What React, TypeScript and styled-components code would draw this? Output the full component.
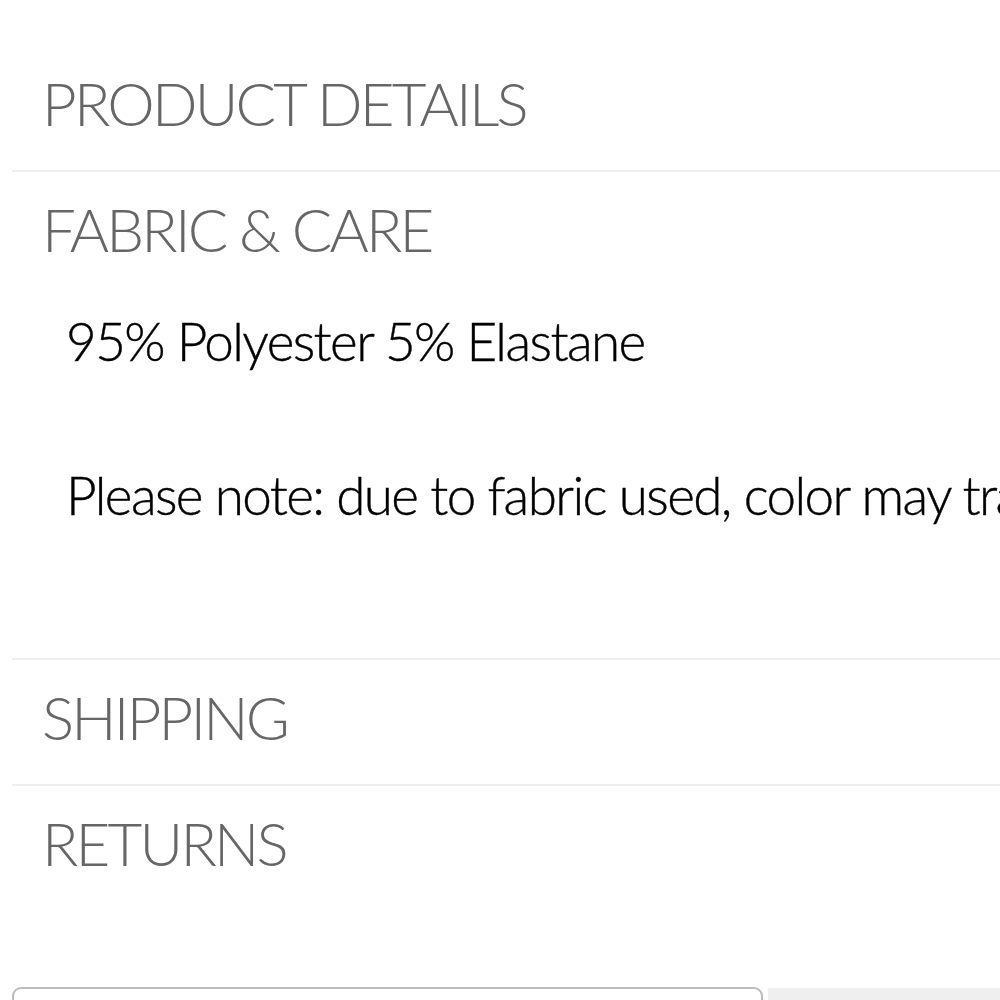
import React from "react";
import styled, { createGlobalStyle } from "styled-components";

const GlobalStyle = createGlobalStyle`
  html, body {
    margin: 0;
    padding: 0;
    background: #ffffff;
    overflow: hidden;
  }
  body {
    font-family: "Lato", "Liberation Sans", sans-serif;
  }
`;

const Page = styled.div`
  width: 1600px;
  height: 1000px;
  padding: 46px 0 0 12px;
  box-sizing: border-box;
  display: flex;
  flex-direction: column;
`;

const Section = styled.section<{ $last?: boolean; $open?: boolean }>`
  border-bottom: ${(p) => (p.$last ? "none" : "2px solid #efefef")};
  padding-bottom: ${(p) => (p.$open ? "125px" : "37px")};
`;

const Heading = styled.h2`
  margin: 0;
  padding: 27px 0 0 30px;
  font-family: "Lato", "Liberation Sans", sans-serif;
  font-weight: 300;
  font-size: 60px;
  line-height: 60px;
  letter-spacing: -2.8px;
  color: #666666;
  white-space: nowrap;
`;

const Body = styled.div`
  padding: 43px 0 0 54px;
`;

const Para = styled.p<{ $gap?: boolean }>`
  margin: 0 0 ${(p) => (p.$gap ? "77px" : "0")};
  font-family: "Lato", "Liberation Sans", sans-serif;
  font-weight: 300;
  font-size: 53px;
  line-height: 77px;
  letter-spacing: -1.6px;
  color: #000000;
  white-space: nowrap;
  -webkit-text-stroke: 0.4px #000000;
`;

const Footer = styled.div`
  margin-top: auto;
  display: flex;
  gap: 5px;
  height: 13px;
`;

const Field = styled.div`
  width: 751px;
  height: 40px;
  box-sizing: border-box;
  border: 2px solid #bcbcbc;
  border-radius: 9px;
  background: #ffffff;
`;

const GreyButton = styled.div`
  flex: 1;
  height: 40px;
  background: #efefef;
  margin-top: 1px;
`;

const sections = [
  { title: "PRODUCT DETAILS" },
  {
    title: "FABRIC & CARE",
    body: [
      "95% Polyester 5% Elastane",
      "Please note: due to fabric used, color may transfer onto lighter colored fabrics.",
    ],
  },
  { title: "SHIPPING" },
  { title: "RETURNS" },
];

export default function App() {
  return (
    <>
      <GlobalStyle />
      <Page>
        {sections.map((s, i) => (
          <Section key={s.title} $open={!!s.body} $last={i === sections.length - 1}>
            <Heading>{s.title}</Heading>
            {s.body && (
              <Body>
                {s.body.map((t, j) => (
                  <Para key={j} $gap={j < s.body!.length - 1}>
                    {t}
                  </Para>
                ))}
              </Body>
            )}
          </Section>
        ))}
        <Footer>
          <Field />
          <GreyButton />
        </Footer>
      </Page>
    </>
  );
}
